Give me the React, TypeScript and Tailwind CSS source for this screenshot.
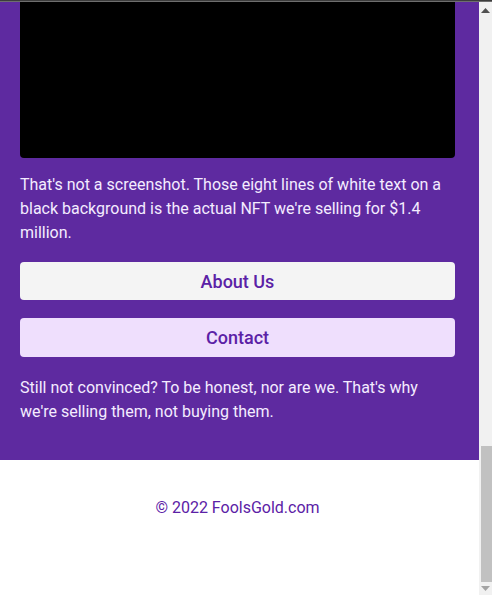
import React from "react";

export default function App() {
  return (
    <div className="w-[492px] h-[595px] overflow-hidden flex flex-col bg-white font-['Roboto',sans-serif]">
      {/* window edge */}
      <div className="h-px bg-[#3c3c3c]" />
      <div className="h-px bg-[#6e6e6e]" />

      <div className="flex flex-1 min-h-0">
        <main className="flex-1 flex flex-col">
          {/* purple content block */}
          <section className="bg-[#5e2aa0] pl-5 pr-6 pb-9">
            <div className="h-[156px] bg-black rounded-b-[4px]" />

            <p className="mt-[15px] text-[16px] leading-6 text-[#f4ecff]">
              That's not a screenshot. Those eight lines of white text on a black background is the
              actual NFT we're selling for $1.4 million.
            </p>

            <button className="mt-[17px] w-full h-[38px] rounded-[4px] bg-[#f4f4f4] text-[18px] font-medium text-[#5b21a6] flex items-center justify-center">
              About Us
            </button>

            <button className="mt-[18px] w-full h-[39px] rounded-[4px] bg-[#efdffd] text-[18px] font-medium text-[#5b21a6] flex items-center justify-center">
              Contact
            </button>

            <p className="mt-[19px] text-[16px] leading-6 text-[#f4ecff]">
              Still not convinced? To be honest, nor are we. That's why we're selling them, not buying
              them.
            </p>
          </section>

          {/* footer */}
          <footer className="flex-1 pt-[36px] pl-5 pr-6 text-center">
            <p className="text-[16px] leading-6 text-[#5b21a6]">© 2022 FoolsGold.com</p>
          </footer>
        </main>

        {/* scrollbar */}
        <div className="w-[13px] bg-[#f1f1f1] flex flex-col items-end">
          <div className="w-full h-[17px] flex items-center justify-center">
            <svg width="9" height="5" viewBox="0 0 9 5">
              <polygon points="4.5,0 9,5 0,5" fill="#505050" />
            </svg>
          </div>
          <div className="flex-1" />
          <div className="w-[11px] h-[136px] bg-[#c1c1c1]" />
          <div className="w-full h-[13px] flex items-center justify-center">
            <svg width="9" height="5" viewBox="0 0 9 5">
              <polygon points="0,0 9,0 4.5,5" fill="#a3a3a3" />
            </svg>
          </div>
        </div>
      </div>
    </div>
  );
}
